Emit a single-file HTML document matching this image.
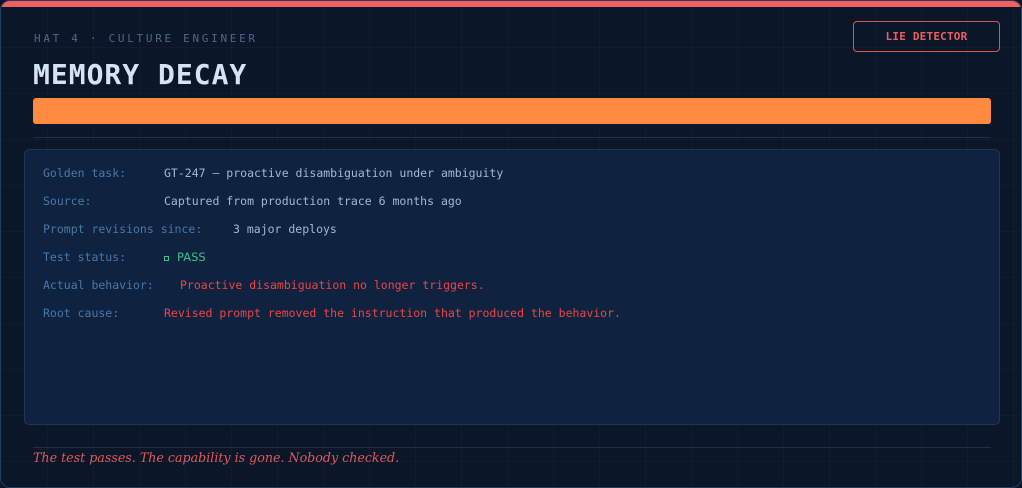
<!DOCTYPE html>
<html><head><style>
*{margin:0;padding:0;box-sizing:border-box}
body{width:1022px;height:488px;background:#0b1628;overflow:hidden;font-family:"DejaVu Sans Mono",monospace;position:relative}
.frame{position:absolute;left:0;top:0;width:1022px;height:488px;border:1px solid #1f3d63;border-radius:10px;overflow:hidden;
background-color:#0b1628;background-image:linear-gradient(rgba(40,70,110,.12) 1px,transparent 1px),linear-gradient(90deg,rgba(40,70,110,.12) 1px,transparent 1px);background-size:46px 46px}
.top{position:absolute;left:0;top:0;width:100%;height:6px;background:#f25f5f}
.abs{position:absolute;white-space:pre}
.lbl{color:#4a77a6;font-size:11.5px}
.val{color:#a3b9d2;font-size:11.5px}
.red{color:#ef4444;font-size:11.5px}
</style></head><body><div class="frame">
<div class="top"></div>
<div class="abs" style="left:33px;top:31px;font-size:11px;letter-spacing:2.7px;color:#4f6886">HAT 4 · CULTURE ENGINEER</div>
<div class="abs" style="left:32px;top:57px;font-size:28px;font-weight:bold;color:#d4e4f4;letter-spacing:1px">MEMORY DECAY</div>
<div class="abs" style="left:852px;top:20px;width:147px;height:31px;border:1px solid #d95656;border-radius:4px;color:#ef5e5e;font-size:11px;font-weight:bold;letter-spacing:0.2px;text-align:center;line-height:29px">LIE DETECTOR</div>
<div class="abs" style="left:32px;top:97px;width:958px;height:26px;background:#ff8a40;border-radius:3px"></div>
<div class="abs" style="left:32px;top:136px;width:958px;height:1px;background:#1a3050"></div>
<div class="abs" style="left:23px;top:148px;width:976px;height:276px;background:#0f2240;border:1px solid #1d3759;border-radius:5px"></div>
<div class="abs lbl" style="left:42px;top:165px">Golden task:</div><div class="abs val" style="left:163px;top:165px">GT-247 — proactive disambiguation under ambiguity</div>
<div class="abs lbl" style="left:42px;top:193px">Source:</div><div class="abs val" style="left:163px;top:193px">Captured from production trace 6 months ago</div>
<div class="abs lbl" style="left:42px;top:221px">Prompt revisions since:</div><div class="abs val" style="left:232px;top:221px">3 major deploys</div>
<div class="abs lbl" style="left:42px;top:249px">Test status:</div>
<div class="abs" style="left:163px;top:255px;width:5px;height:5px;border:1px solid #3fbf8f"></div>
<div class="abs" style="left:176px;top:249px;font-family:'DejaVu Sans',sans-serif;font-size:11.5px;color:#3fbf8f">PASS</div>
<div class="abs lbl" style="left:42px;top:277px">Actual behavior:</div><div class="abs red" style="left:179px;top:277px">Proactive disambiguation no longer triggers.</div>
<div class="abs lbl" style="left:42px;top:305px">Root cause:</div><div class="abs red" style="left:163px;top:305px">Revised prompt removed the instruction that produced the behavior.</div>
<div class="abs" style="left:32px;top:446px;width:958px;height:1px;background:#1a3050"></div>
<div class="abs" style="left:32px;top:449px;font-family:'DejaVu Serif',serif;font-style:italic;font-size:12.65px;color:#e05a5a">The test passes. The capability is gone. Nobody checked.</div>
</div></body></html>
